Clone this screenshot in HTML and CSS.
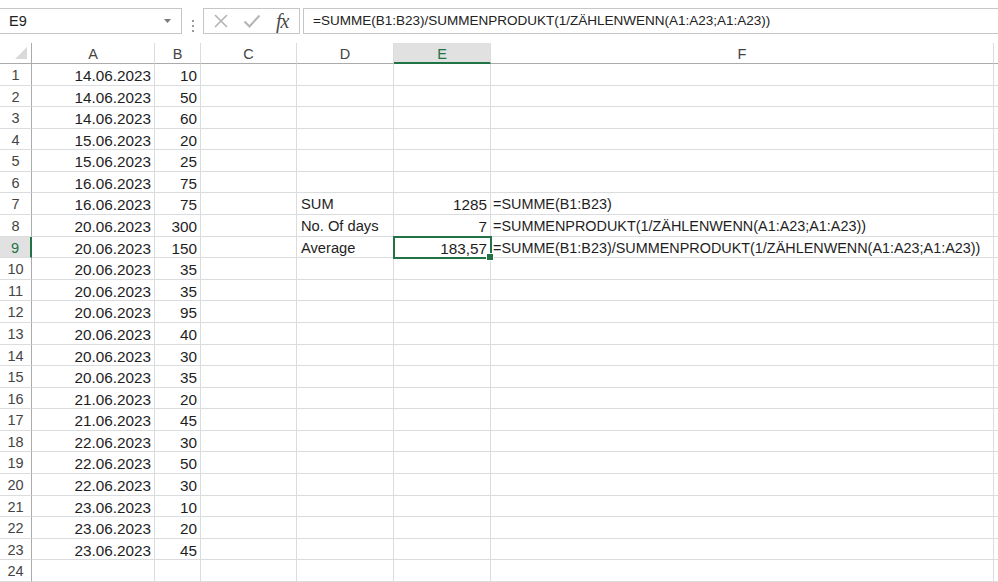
FILE: index.html
```html
<!DOCTYPE html>
<html lang="de">
<head>
    <meta charset="UTF-8">
    <title>Mappe1 - Excel</title>
    <link rel="stylesheet" href="styles.css">
</head>
<body>
    <div class="formula-bar">
        <div class="name-box">
            <span>E9</span>
            <svg class="dropdown" width="7" height="4" viewBox="0 0 7 4"><path d="M0 0h7L3.5 4z" fill="#7a7a7a"/></svg>
        </div>
        <div class="grip"><i></i><i></i><i></i></div>
        <div class="fx-box">
            <svg width="16" height="16" viewBox="0 0 16 16"><path d="M2 2l12 12M14 2L2 14" stroke="#b4b4b4" stroke-width="1.6" fill="none"/></svg>
            <svg width="18" height="16" viewBox="0 0 18 16"><path d="M1.5 8.5l5 5L16.5 2.5" stroke="#b4b4b4" stroke-width="2" fill="none"/></svg>
            <span class="fx">fx</span>
        </div>
        <div class="formula-input">=SUMME(B1:B23)/SUMMENPRODUKT(1/ZÄHLENWENN(A1:A23;A1:A23))</div>
    </div>

    <div class="sheet">
        <div class="corner"><svg width="12" height="12" viewBox="0 0 12 12"><path d="M12 0v12H0z" fill="#dadada"/></svg></div>
        <div class="ch">A</div><div class="ch">B</div><div class="ch">C</div><div class="ch">D</div><div class="ch sel">E</div><div class="ch">F</div><div class="ch"></div>

        <div class="rh">1</div><div class="c r">14.06.2023</div><div class="c r">10</div><div class="c"></div><div class="c"></div><div class="c"></div><div class="c"></div><div class="c"></div>
        <div class="rh">2</div><div class="c r">14.06.2023</div><div class="c r">50</div><div class="c"></div><div class="c"></div><div class="c"></div><div class="c"></div><div class="c"></div>
        <div class="rh">3</div><div class="c r">14.06.2023</div><div class="c r">60</div><div class="c"></div><div class="c"></div><div class="c"></div><div class="c"></div><div class="c"></div>
        <div class="rh">4</div><div class="c r">15.06.2023</div><div class="c r">20</div><div class="c"></div><div class="c"></div><div class="c"></div><div class="c"></div><div class="c"></div>
        <div class="rh">5</div><div class="c r">15.06.2023</div><div class="c r">25</div><div class="c"></div><div class="c"></div><div class="c"></div><div class="c"></div><div class="c"></div>
        <div class="rh">6</div><div class="c r">16.06.2023</div><div class="c r">75</div><div class="c"></div><div class="c"></div><div class="c"></div><div class="c"></div><div class="c"></div>
        <div class="rh">7</div><div class="c r">16.06.2023</div><div class="c r">75</div><div class="c"></div><div class="c t">SUM</div><div class="c r">1285</div><div class="c f">=SUMME(B1:B23)</div><div class="c"></div>
        <div class="rh">8</div><div class="c r">20.06.2023</div><div class="c r">300</div><div class="c"></div><div class="c t">No. Of days</div><div class="c r">7</div><div class="c f">=SUMMENPRODUKT(1/ZÄHLENWENN(A1:A23;A1:A23))</div><div class="c"></div>
        <div class="rh sel">9</div><div class="c r">20.06.2023</div><div class="c r">150</div><div class="c"></div><div class="c t">Average</div><div class="c r active">183,57</div><div class="c f">=SUMME(B1:B23)/SUMMENPRODUKT(1/ZÄHLENWENN(A1:A23;A1:A23))</div><div class="c"></div>
        <div class="rh">10</div><div class="c r">20.06.2023</div><div class="c r">35</div><div class="c"></div><div class="c"></div><div class="c"></div><div class="c"></div><div class="c"></div>
        <div class="rh">11</div><div class="c r">20.06.2023</div><div class="c r">35</div><div class="c"></div><div class="c"></div><div class="c"></div><div class="c"></div><div class="c"></div>
        <div class="rh">12</div><div class="c r">20.06.2023</div><div class="c r">95</div><div class="c"></div><div class="c"></div><div class="c"></div><div class="c"></div><div class="c"></div>
        <div class="rh">13</div><div class="c r">20.06.2023</div><div class="c r">40</div><div class="c"></div><div class="c"></div><div class="c"></div><div class="c"></div><div class="c"></div>
        <div class="rh">14</div><div class="c r">20.06.2023</div><div class="c r">30</div><div class="c"></div><div class="c"></div><div class="c"></div><div class="c"></div><div class="c"></div>
        <div class="rh">15</div><div class="c r">20.06.2023</div><div class="c r">35</div><div class="c"></div><div class="c"></div><div class="c"></div><div class="c"></div><div class="c"></div>
        <div class="rh">16</div><div class="c r">21.06.2023</div><div class="c r">20</div><div class="c"></div><div class="c"></div><div class="c"></div><div class="c"></div><div class="c"></div>
        <div class="rh">17</div><div class="c r">21.06.2023</div><div class="c r">45</div><div class="c"></div><div class="c"></div><div class="c"></div><div class="c"></div><div class="c"></div>
        <div class="rh">18</div><div class="c r">22.06.2023</div><div class="c r">30</div><div class="c"></div><div class="c"></div><div class="c"></div><div class="c"></div><div class="c"></div>
        <div class="rh">19</div><div class="c r">22.06.2023</div><div class="c r">50</div><div class="c"></div><div class="c"></div><div class="c"></div><div class="c"></div><div class="c"></div>
        <div class="rh">20</div><div class="c r">22.06.2023</div><div class="c r">30</div><div class="c"></div><div class="c"></div><div class="c"></div><div class="c"></div><div class="c"></div>
        <div class="rh">21</div><div class="c r">23.06.2023</div><div class="c r">10</div><div class="c"></div><div class="c"></div><div class="c"></div><div class="c"></div><div class="c"></div>
        <div class="rh">22</div><div class="c r">23.06.2023</div><div class="c r">20</div><div class="c"></div><div class="c"></div><div class="c"></div><div class="c"></div><div class="c"></div>
        <div class="rh">23</div><div class="c r">23.06.2023</div><div class="c r">45</div><div class="c"></div><div class="c"></div><div class="c"></div><div class="c"></div><div class="c"></div>
        <div class="rh">24</div><div class="c"></div><div class="c"></div><div class="c"></div><div class="c"></div><div class="c"></div><div class="c"></div><div class="c"></div>
    </div>
</body>
</html>
```

FILE: styles.css
```css
* {
    box-sizing: border-box;
    margin: 0;
    padding: 0;
}

body {
    background: #fff;
    color: #1e1e1e;
    font-family: 'Liberation Sans', Arial, sans-serif;
    overflow: hidden;
}

/* formula bar */
.formula-bar {
    display: flex;
    height: 43px;
    padding-top: 8px;
}

.name-box {
    display: flex;
    align-items: center;
    justify-content: space-between;
    width: 183px;
    height: 26px;
    margin-left: -1px;
    padding: 0 10px 0 9px;
    border: 1px solid #c6c6c6;
    font-size: 14.5px;
    color: #222;
}

.grip {
    display: flex;
    flex-direction: column;
    justify-content: center;
    gap: 3px;
    width: 21px;
    align-items: center;
}

.grip i {
    width: 2px;
    height: 2px;
    background: #9a9a9a;
}

.fx-box {
    display: flex;
    align-items: center;
    gap: 14px;
    width: 97px;
    height: 26px;
    padding-left: 9px;
    border: 1px solid #c6c6c6;
}

.fx {
    font-family: 'Liberation Serif', serif;
    font-style: italic;
    font-size: 20px;
    color: #4a4a4a;
    margin-left: 1px;
    letter-spacing: -1px;
}

.formula-input {
    flex: 1;
    height: 26px;
    margin-left: 3px;
    margin-right: -2px;
    padding-left: 9px;
    border: 1px solid #c6c6c6;
    font-size: 13.5px;
    line-height: 24px;
    color: #222;
    white-space: nowrap;
}

/* grid */
.sheet {
    display: grid;
    grid-template-columns: 32px 123px 46px 96px 97px 97px 503px 1fr;
    grid-template-rows: 21px;
    grid-auto-rows: 21.58px;
}

.corner,
.ch,
.rh,
.c {
    border-right: 1px solid #dadcdd;
    border-bottom: 1px solid #dadcdd;
}

.corner {
    display: flex;
    align-items: flex-end;
    justify-content: flex-end;
    padding: 0 4px 4px 0;
    border-right-color: #ababab;
    border-bottom-color: #ababab;
}

.ch {
    padding-top: 2px;
    text-align: center;
    font-size: 14.5px;
    line-height: 18px;
    color: #444;
    border-bottom-color: #ababab;
}

.ch.sel {
    background: #e1e1e1;
    color: #217346;
    border-bottom: 2px solid #217346;
}

.rh {
    padding-top: 2px;
    text-align: center;
    font-size: 14.5px;
    line-height: 19px;
    color: #444;
    border-right-color: #ababab;
}

.rh.sel {
    background: #e1e1e1;
    color: #217346;
    border-right: 2px solid #217346;
}

.c {
    padding: 2px 4px 0;
    font-size: 15.3px;
    line-height: 19px;
    white-space: nowrap;
}

.c.t {
    font-size: 14.7px;
}

.c.f {
    padding-left: 2px;
    font-size: 14.4px;
}

.c.r {
    text-align: right;
    padding-right: 3px;
}

.c.active {
    position: relative;
    outline: 2px solid #217346;
    outline-offset: -1px;
    z-index: 1;
}

.c.active::after {
    content: '';
    position: absolute;
    right: -4px;
    bottom: -4px;
    width: 6px;
    height: 6px;
    background: #217346;
    border: 1px solid #fff;
}
```
